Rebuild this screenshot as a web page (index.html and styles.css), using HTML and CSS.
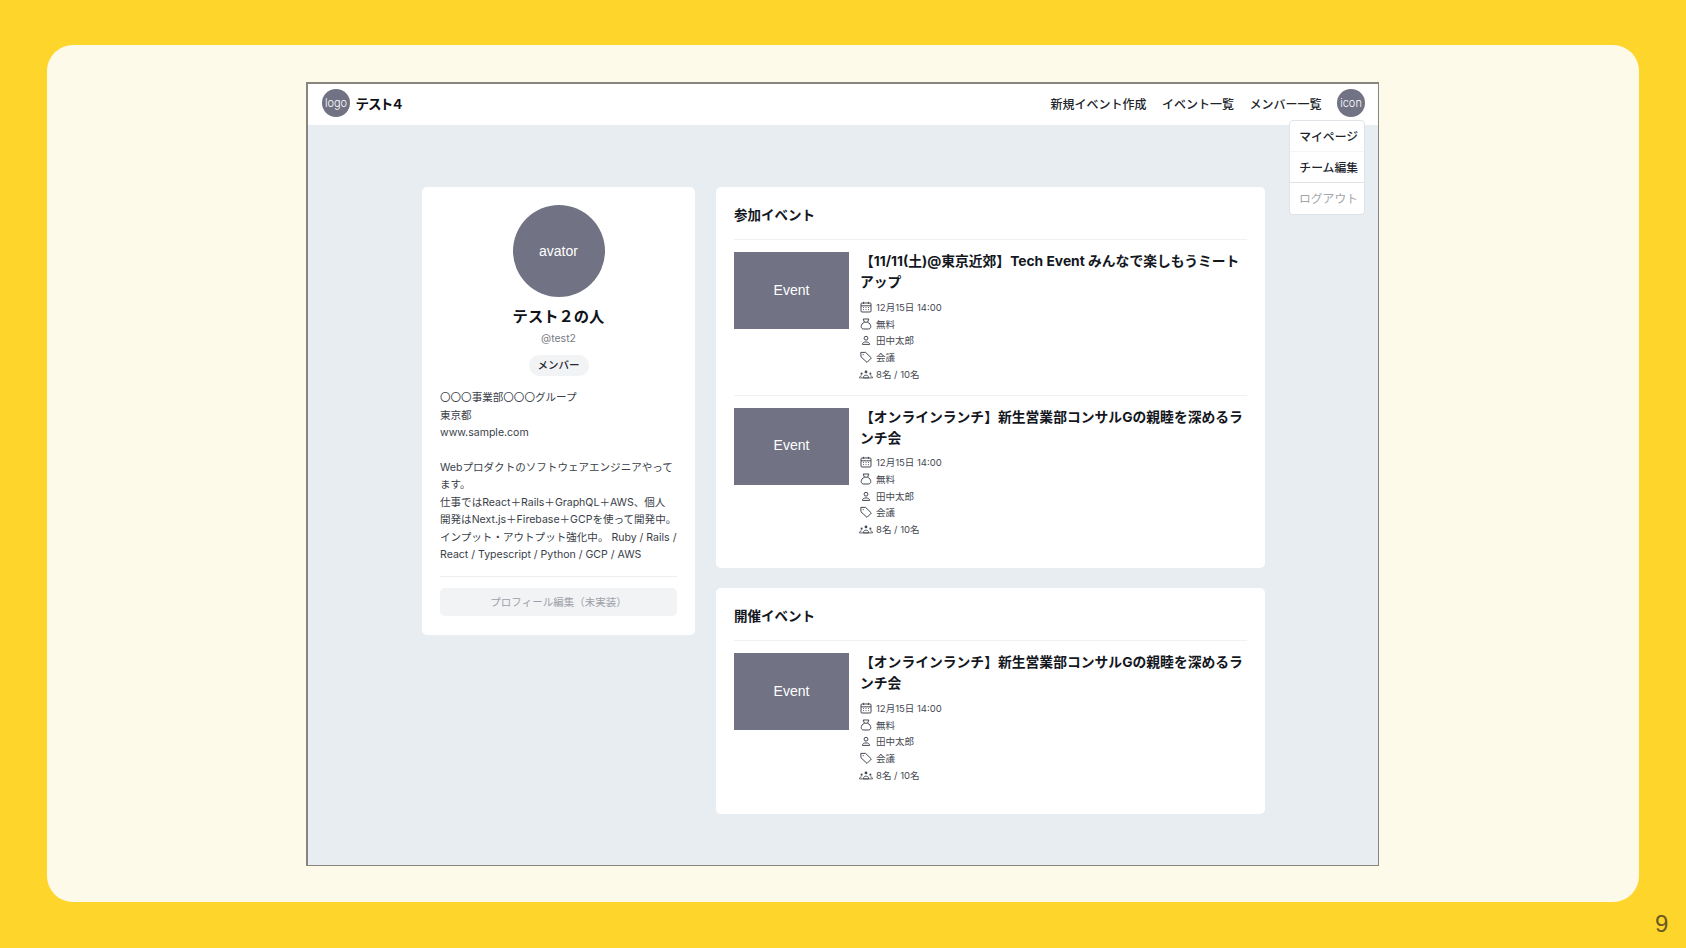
FILE: index.html
```html
<!DOCTYPE html>
<html lang="ja">
<head>
<meta charset="utf-8">
<title>テスト4</title>
<link rel="stylesheet" href="styles.css">
</head>
<body>
<svg class="defs" width="0" height="0" aria-hidden="true">
  <symbol id="i-cal" viewBox="0 0 12 12"><rect x="1" y="2" width="10" height="9" rx="1" fill="none" stroke="currentColor"/><path d="M1 4.8h10M3.6 .8v2.2M8.4 .8v2.2" stroke="currentColor" fill="none"/><path d="M3 6.5h1M5.5 6.5h1M8 6.5h1M3 8.6h1M5.5 8.6h1M8 8.6h1" stroke="currentColor" stroke-width=".8" fill="none"/></symbol>
  <symbol id="i-bag" viewBox="0 0 12 12"><path d="M3.200 1h5.600L7.600 4.200H4.400zM4.400 4.200C2.600 5 1.200 6.800 1.200 8.600c0 1.600 1.200 2.400 2.600 2.400h4.400c1.400 0 2.600-.8 2.600-2.400 0-1.800-1.400-3.600-3.200-4.400" fill="none" stroke="currentColor"/></symbol>
  <symbol id="i-user" viewBox="0 0 12 12"><circle cx="6" cy="4.200" r="1.900" fill="none" stroke="currentColor"/><path d="M2.400 10.400c0-1.600 1.500-2.500 3.600-2.500s3.600.9 3.600 2.500z" fill="none" stroke="currentColor"/></symbol>
  <symbol id="i-tag" viewBox="0 0 12 12"><path d="M.8 1.400h4.800l5.800 5.600-4.400 4.400L1 5.800z" fill="none" stroke="currentColor" stroke-linejoin="round"/><circle cx="3.200" cy="3.600" r=".6" fill="currentColor"/></symbol>
  <symbol id="i-users" viewBox="0 0 15 10"><circle cx="7.500" cy="2.800" r="1.500" fill="currentColor"/><path d="M4.600 9.200c0-1.800 1.200-3 2.900-3s2.900 1.200 2.900 3z" fill="none" stroke="currentColor" stroke-width=".9"/><circle cx="2.800" cy="4.600" r="1.100" fill="currentColor"/><circle cx="12.200" cy="4.600" r="1.100" fill="currentColor"/><path d="M.5 9.200c0-1.400.9-2.200 2.300-2.200M14.500 9.200c0-1.400-.9-2.200-2.300-2.200" fill="none" stroke="currentColor" stroke-width=".9"/><path d="M.5 9.200h14" stroke="currentColor" stroke-width=".9" fill="none"/></symbol>
</svg>
<main class="slide">
  <div class="panel">
    <div class="frame">
      <header class="topbar">
        <div class="brand">
          <span class="disc disc-small">logo</span>
          <span class="brand-name">テスト４</span>
        </div>
        <nav class="nav">
          <a class="nav-link">新規イベント作成</a>
          <a class="nav-link">イベント一覧</a>
          <a class="nav-link">メンバー一覧</a>
          <span class="disc disc-small">icon</span>
        </nav>
        <ul class="menu">
          <li class="menu-item">マイページ</li>
          <li class="menu-item">チーム編集</li>
          <li class="menu-item menu-muted">ログアウト</li>
        </ul>
      </header>
      <div class="content">
        <aside class="card profile">
          <div class="disc disc-large">avator</div>
          <h1 class="profile-name">テスト２の人</h1>
          <p class="profile-id">@test2</p>
          <span class="badge">メンバー</span>
          <div class="bio">
            <p>〇〇〇事業部〇〇〇グループ<br>東京都<br>www.sample.com</p>
            <p>Webプロダクトのソフトウェアエンジニアやって<br>ます。<br>仕事ではReact＋Rails＋GraphQL＋AWS、個人<br>開発はNext.js＋Firebase＋GCPを使って開発中。<br>インプット・アウトプット強化中。 Ruby / Rails /<br>React / Typescript / Python / GCP / AWS</p>
          </div>
          <button class="edit-button" type="button">プロフィール編集（未実装）</button>
        </aside>
        <div class="events">
          <section class="card event-card event-card-joined">
            <h2 class="section-title">参加イベント</h2>
            <article class="event">
              <div class="thumb">Event</div>
              <div class="event-body">
                <h3 class="event-title">【11/11(土)@東京近郊】Tech Event みんなで楽しもうミートアップ</h3>
                <ul class="meta">
                  <li class="meta-row"><svg class="icon"><use href="#i-cal"/></svg>12月15日 14:00</li>
                  <li class="meta-row"><svg class="icon"><use href="#i-bag"/></svg>無料</li>
                  <li class="meta-row"><svg class="icon"><use href="#i-user"/></svg>田中太郎</li>
                  <li class="meta-row"><svg class="icon"><use href="#i-tag"/></svg>会議</li>
                  <li class="meta-row"><svg class="icon icon-wide"><use href="#i-users"/></svg>8名 / 10名</li>
                </ul>
              </div>
            </article>
            <article class="event">
              <div class="thumb">Event</div>
              <div class="event-body">
                <h3 class="event-title">【オンラインランチ】新生営業部コンサルGの親睦を深めるランチ会</h3>
                <ul class="meta">
                  <li class="meta-row"><svg class="icon"><use href="#i-cal"/></svg>12月15日 14:00</li>
                  <li class="meta-row"><svg class="icon"><use href="#i-bag"/></svg>無料</li>
                  <li class="meta-row"><svg class="icon"><use href="#i-user"/></svg>田中太郎</li>
                  <li class="meta-row"><svg class="icon"><use href="#i-tag"/></svg>会議</li>
                  <li class="meta-row"><svg class="icon icon-wide"><use href="#i-users"/></svg>8名 / 10名</li>
                </ul>
              </div>
            </article>
          </section>
          <section class="card event-card event-card-hosted">
            <h2 class="section-title">開催イベント</h2>
            <article class="event">
              <div class="thumb">Event</div>
              <div class="event-body">
                <h3 class="event-title">【オンラインランチ】新生営業部コンサルGの親睦を深めるランチ会</h3>
                <ul class="meta">
                  <li class="meta-row"><svg class="icon"><use href="#i-cal"/></svg>12月15日 14:00</li>
                  <li class="meta-row"><svg class="icon"><use href="#i-bag"/></svg>無料</li>
                  <li class="meta-row"><svg class="icon"><use href="#i-user"/></svg>田中太郎</li>
                  <li class="meta-row"><svg class="icon"><use href="#i-tag"/></svg>会議</li>
                  <li class="meta-row"><svg class="icon icon-wide"><use href="#i-users"/></svg>8名 / 10名</li>
                </ul>
              </div>
            </article>
          </section>
        </div>
      </div>
    </div>
  </div>
  <span class="page-number">9</span>
</main>
</body>
</html>
```
FILE: styles.css
```css
* { box-sizing: border-box; }
html, body { margin: 0; padding: 0; }
body {
  width: 1686px;
  height: 948px;
  overflow: hidden;
  background: #fed52b;
  font-family: Inter, "Noto Sans CJK JP", "Liberation Sans", sans-serif;
  color: #181b22;
}
h1, h2, h3, p, ul { margin: 0; padding: 0; }
ul { list-style: none; }
.defs { position: absolute; }

.slide {
  position: relative;
  width: 1686px;
  height: 948px;
  padding: 45px 47px 46px 47px;
}
.panel {
  height: 857px;
  background: #fefaea;
  border-radius: 26px;
  padding: 37px 260px 36px 259px;
}
.frame {
  height: 784px;
  background: #e8edf1;
  border-style: solid;
  border-color: #86867f;
  border-width: 2px 1px 1px 2px;
}
.page-number {
  position: absolute;
  left: 1655px;
  top: 911px;
  font-family: "Liberation Sans", sans-serif;
  font-size: 24px;
  line-height: 26px;
  color: #6a5a22;
}

.topbar {
  position: relative;
  height: 41px;
  background: #fff;
  display: flex;
  align-items: center;
  justify-content: space-between;
  padding: 0 13px 3px 14px;
}
.brand, .nav { display: flex; align-items: center; }
.brand { gap: 6px; }
.brand-name { font-size: 13.500px; font-weight: 700; color: #0d0f14; font-feature-settings: "palt"; }
.nav { gap: 15.500px; }
.nav-link { font-size: 12px; font-weight: 500; color: #20232a; }

.disc {
  background: #717284;
  color: #fff;
  border-radius: 50%;
  display: flex;
  align-items: center;
  justify-content: center;
  flex: none;
}
.disc-small { width: 28px; height: 28px; font-size: 11px; font-weight: 300; }
.disc-large {
  width: 92px;
  height: 92px;
  font-family: "Liberation Sans", sans-serif;
  font-size: 14px;
}

.menu {
  position: absolute;
  right: 13px;
  top: 36px;
  width: 76px;
  height: 95px;
  background: #fff;
  border: 1px solid #dfe2e7;
  border-radius: 4px;
  z-index: 2;
}
.menu-item {
  height: 31px;
  line-height: 32px;
  padding-right: 6px;
  text-align: right;
  font-size: 11.800px;
  font-weight: 500;
  color: #20232a;
  border-bottom: 1px solid #f4f5f7;
}
.menu-item:nth-child(2) { border-bottom-color: #dfe2e7; }
.menu-muted { color: #a3a5ab; font-weight: 400; border-bottom: 0; }

.content {
  display: flex;
  align-items: flex-start;
  gap: 21px;
  padding: 62px 0 0 114px;
}
.card { background: #fff; border-radius: 5px; }

.profile {
  width: 273px;
  height: 448px;
  padding: 18px 18px 0;
  display: flex;
  flex-direction: column;
  align-items: center;
}
.profile-name {
  margin-top: 8px;
  font-size: 15.300px;
  line-height: 24px;
  font-weight: 700;
  color: #10131a;
}
.profile-id {
  margin-top: 2px;
  font-size: 10.500px;
  line-height: 16px;
  color: #767a83;
}
.badge {
  margin-top: 8px;
  height: 21px;
  line-height: 21px;
  padding: 0 9px;
  border-radius: 11px;
  background: #f2f3f5;
  font-size: 10.500px;
  font-weight: 500;
  color: #23262d;
}
.bio {
  align-self: stretch;
  margin-top: 13px;
  padding-bottom: 12px;
  border-bottom: 1px solid #eceef1;
  font-size: 10.550px;
  line-height: 17.500px;
  color: #3a3e48;
  white-space: nowrap;
  display: flex;
  flex-direction: column;
  gap: 17px;
}
.edit-button {
  align-self: stretch;
  margin-top: 11px;
  height: 28px;
  border: 0;
  border-radius: 5px;
  background: #f2f3f5;
  color: #9da0a8;
  font-family: inherit;
  font-size: 10.500px;
}

.events {
  width: 549px;
  display: flex;
  flex-direction: column;
  gap: 20px;
}
.event-card { padding: 16px 18px 0; }
.event-card-joined { height: 381px; }
.event-card-hosted { height: 226px; }
.section-title {
  height: 36px;
  font-size: 13.500px;
  line-height: 24px;
  font-weight: 700;
  color: #14171e;
}
.event {
  display: flex;
  gap: 11px;
  height: 155.500px;
  padding-top: 12px;
  border-top: 1px solid #eff1f3;
}
.thumb {
  width: 115px;
  height: 77px;
  flex: none;
  background: #717284;
  color: #fff;
  display: flex;
  align-items: center;
  justify-content: center;
  padding-bottom: 2px;
  font-family: "Liberation Sans", sans-serif;
  font-size: 14px;
}
.event-body { flex: 1; min-width: 0; margin-top: -1px; }
.event-title {
  font-size: 13.800px;
  line-height: 21px;
  font-weight: 700;
  color: #14171e;
  margin-bottom: 5.500px;
}
.meta-row {
  display: flex;
  align-items: center;
  gap: 4px;
  height: 16.700px;
  font-size: 9.500px;
  color: #444852;
  white-space: nowrap;
}
.icon { width: 12px; height: 12px; color: #444852; flex: none; }
.icon-wide { width: 14px; height: 10px; margin-left: -1px; margin-right: -1px; }
```
